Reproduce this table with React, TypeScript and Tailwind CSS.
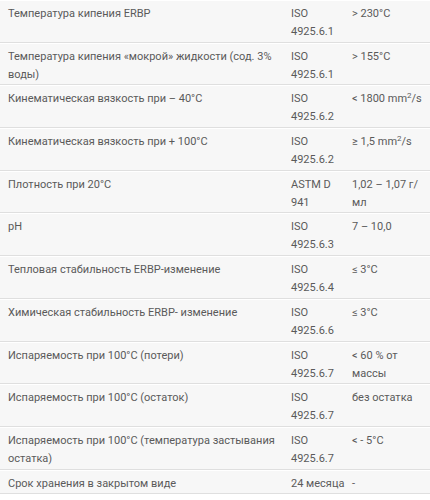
import React from "react";

const rows: [React.ReactNode, React.ReactNode, React.ReactNode][] = [
  ["Температура кипения ERBP", "ISO 4925.6.1", "> 230°C"],
  ["Температура кипения «мокрой» жидкости (сод. 3% воды)", "ISO 4925.6.1", "> 155°C"],
  [
    "Кинематическая вязкость при – 40°C",
    "ISO 4925.6.2",
    <span className="whitespace-nowrap">
      {"< 1800 mm"}
      <sup className="text-[8px] leading-none">2</sup>/s
    </span>,
  ],
  [
    "Кинематическая вязкость при + 100°C",
    "ISO 4925.6.2",
    <span className="whitespace-nowrap">
      {"≥ 1,5 mm"}
      <sup className="text-[8px] leading-none">2</sup>/s
    </span>,
  ],
  ["Плотность при 20°C", "ASTM D 941", "1,02 – 1,07 г/мл"],
  ["pH", "ISO 4925.6.3", "7 – 10,0"],
  ["Тепловая стабильность ERBP-изменение", "ISO 4925.6.4", "≤ 3°C"],
  ["Химическая стабильность ERBP- изменение", "ISO 4925.6.6", "≤ 3°C"],
  ["Испаряемость при 100°C (потери)", "ISO 4925.6.7", "< 60 % от массы"],
  ["Испаряемость при 100°C (остаток)", "ISO 4925.6.7", "без остатка"],
  ["Испаряемость при 100°C (температура застывания остатка)", "ISO 4925.6.7", "< - 5°C"],
  [
    "Срок хранения в закрытом виде",
    <span className="whitespace-nowrap">24 месяца</span>,
    "-",
  ],
];

export default function App() {
  return (
    <div className="w-[430px] h-[500px] overflow-hidden bg-white font-['Roboto',sans-serif] text-[11px] leading-[18px] text-[#5a5a5a]">
      {rows.map((r, i) => (
        <div
          key={i}
          className="grid grid-cols-[283px_61px_86px] bg-[#f7f7f7] border-b border-[#dfdfdf] border-t border-t-white pt-[4px] pb-[0.7px]"
        >
          <div className="pl-[8px] pr-[4px]">{r[0]}</div>
          <div className="pl-[8px]">{r[1]}</div>
          <div className="pl-[8px] pr-[4px]">{r[2]}</div>
        </div>
      ))}
    </div>
  );
}
